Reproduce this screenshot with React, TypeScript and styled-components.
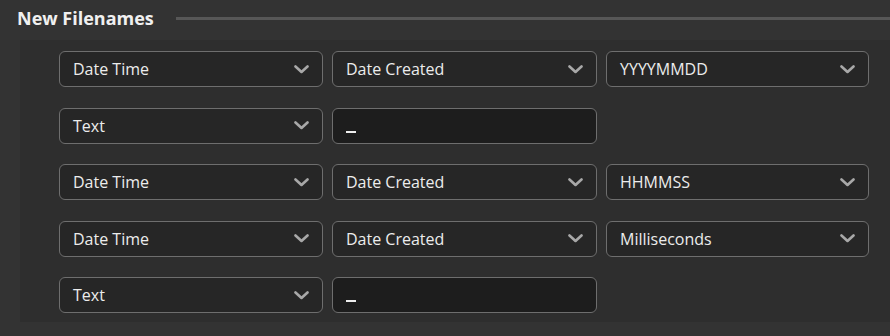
import React from "react";
import styled, { createGlobalStyle } from "styled-components";

const Global = createGlobalStyle`
  html, body { margin: 0; padding: 0; background: #333333; }
  body { font-family: "Open Sans", "Noto Sans", sans-serif; overflow: hidden; }
`;

const Page = styled.div`
  width: 890px;
  height: 336px;
  background: #333333;
  box-sizing: border-box;
`;

const Header = styled.div`
  display: flex;
  align-items: center;
  height: 38px;
  padding-left: 17px;
`;

const Title = styled.div`
  color: #f0f0f0;
  font-size: 18px;
  font-weight: 700;
  margin-top: -2px;
`;

const Rule = styled.div`
  flex: 1;
  height: 3px;
  background: #575757;
  margin-left: 22px;
  margin-top: -2px;
`;

const Panel = styled.div`
  margin: 2px 0 0 20px;
  padding: 11px 0 9px 39px;
  background: #2e2e2e;
  display: grid;
  grid-template-columns: 264px 265px 263px;
  column-gap: 9px;
  row-gap: 20.5px;
`;

const Field = styled.div<{ $input?: boolean }>`
  height: 36px;
  box-sizing: border-box;
  border: 1.5px solid #6e6e6e;
  border-radius: 6px;
  background: ${(p) => (p.$input ? "#1d1d1d" : "#262626")};
  display: flex;
  align-items: center;
  justify-content: space-between;
  padding: 0 13px 0 13px;
  color: #ececec;
  font-size: 16px;
`;

const Label = styled.span`
  line-height: 1;
`;

const Underscore = styled.span`
  width: 10px;
  height: 2px;
  background: #eeeeee;
  margin-top: 12px;
`;

const Chevron = () => (
  <svg width="15" height="9" viewBox="0 0 15 9" fill="none">
    <path d="M1.5 1.5 L7.5 7 L13.5 1.5" stroke="#a8a8a8" strokeWidth="2.6" strokeLinecap="round" strokeLinejoin="round" />
  </svg>
);

const Select = ({ label }: { label: string }) => (
  <Field>
    <Label>{label}</Label>
    <Chevron />
  </Field>
);

const TextInput = () => (
  <Field $input>
    <Underscore />
    <span />
  </Field>
);

const Empty = styled.div``;

export default function App() {
  return (
    <Page>
      <Global />
      <Header>
        <Title>New Filenames</Title>
        <Rule />
      </Header>
      <Panel>
        <Select label="Date Time" />
        <Select label="Date Created" />
        <Select label="YYYYMMDD" />

        <Select label="Text" />
        <TextInput />
        <Empty />

        <Select label="Date Time" />
        <Select label="Date Created" />
        <Select label="HHMMSS" />

        <Select label="Date Time" />
        <Select label="Date Created" />
        <Select label="Milliseconds" />

        <Select label="Text" />
        <TextInput />
        <Empty />
      </Panel>
    </Page>
  );
}
